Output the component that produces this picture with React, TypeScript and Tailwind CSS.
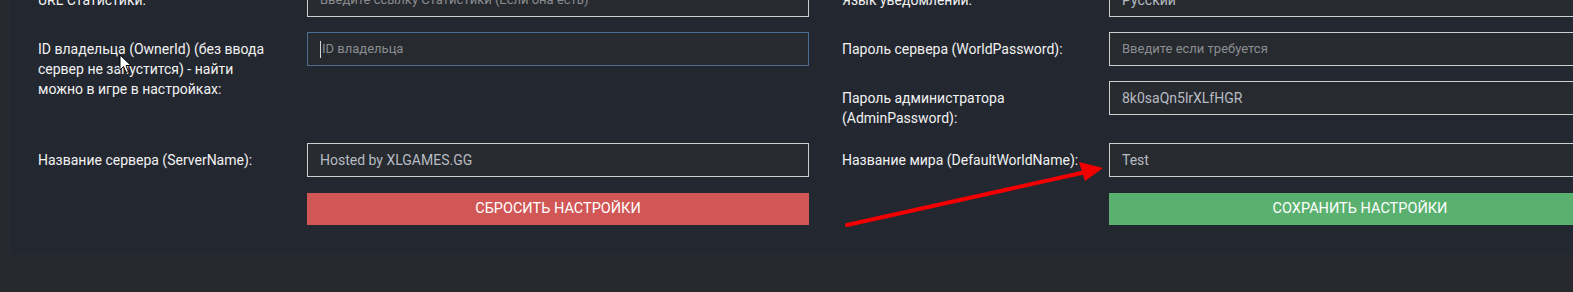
import React from "react";

const font = { fontFamily: "Roboto, 'Liberation Sans', sans-serif" };

function Field({
  label,
  value,
  placeholder,
  focused,
  className = "",
}: {
  label: React.ReactNode;
  value?: string;
  placeholder?: string;
  focused?: boolean;
  className?: string;
}) {
  return (
    <div className={`flex items-start ${className}`}>
      <div className="w-[269px] shrink-0 pt-[7px] pr-6 text-[14px] leading-5 text-[#f2f2f2]">
        {label}
      </div>
      <div
        className={`flex h-[34px] w-[502px] shrink-0 items-center border bg-[#272a2f] px-3 ${
          focused ? "border-[#4b6d93]" : "border-[#cfcfcf]"
        }`}
      >
        {focused && <span className="mr-[1px] h-[17px] w-px bg-[#d8d8d8]" />}
        {value ? (
          <span className="text-[14px] text-[#b7bcc3]">{value}</span>
        ) : (
          <span className="text-[13px] text-[#8b8d91]">{placeholder}</span>
        )}
      </div>
    </div>
  );
}

function Button({ color, children }: { color: string; children: React.ReactNode }) {
  return (
    <div className="flex">
      <div className="w-[269px] shrink-0" />
      <button
        className={`h-[32px] w-[502px] shrink-0 text-[14.5px] uppercase text-white ${color}`}
      >
        {children}
      </button>
    </div>
  );
}

export default function App() {
  return (
    <div className="relative h-[292px] w-full overflow-hidden bg-[#27292e]" style={font}>
      <div className="-mt-[17px] ml-[10px] flex w-[1640px] bg-[#232730] pb-[29px] pl-[28px]">
        {/* left column */}
        <div className="flex w-[802px] shrink-0 flex-col">
          <Field
            className="mb-[15px]"
            label="URL Статистики:"
            placeholder="Введите ссылку Статистики (Если она есть)"
          />
          <Field
            className="mb-[15px] min-h-[96px]"
            focused
            label={
              <>
                ID владельца (OwnerId) (без ввода
                <br />
                сервер не запустится) - найти
                <br />
                можно в игре в настройках:
              </>
            }
            placeholder="ID владельца"
          />
          <Field
            className="mb-4"
            label="Название сервера (ServerName):"
            value="Hosted by XLGAMES.GG"
          />
          <Button color="bg-[#d15656]">Сбросить настройки</Button>
        </div>

        {/* right column */}
        <div className="-mr-[2px] flex w-[800px] shrink-0 flex-col pl-[2px] [&>div>div:first-child]:w-[267px]">
          <Field className="mb-[15px]" label="Язык уведомлений:" value="Русский" />
          <Field
            className="mb-[15px]"
            label="Пароль сервера (WorldPassword):"
            placeholder="Введите если требуется"
          />
          <Field
            className="mb-[15px] min-h-[47px]"
            label={
              <>
                Пароль администратора
                <br />
                (AdminPassword):
              </>
            }
            value="8k0saQn5lrXLfHGR"
          />
          <Field
            className="mb-4"
            label="Название мира (DefaultWorldName):"
            value="Test"
          />
          <Button color="bg-[#5ab16f]">Сохранить настройки</Button>
        </div>
      </div>

      {/* red arrow annotation */}
      <svg
        className="pointer-events-none absolute left-0 top-0"
        width="1573"
        height="292"
        viewBox="0 0 1573 292"
      >
        <line x1="847" y1="225" x2="1086" y2="172" stroke="#f20000" strokeWidth="4" strokeLinecap="round" />
        <polygon points="1103,168 1079,162 1085,181" fill="#f20000" />
      </svg>

      {/* mouse cursor */}
      <svg className="pointer-events-none absolute left-[119px] top-[54px]" width="14" height="20" viewBox="0 0 14 20">
        <path d="M1 1 L1 16 L4.5 12.5 L7 18.5 L9.5 17.5 L7 11.5 L12 11.5 Z" fill="#fff" stroke="#000" strokeWidth="1" strokeLinejoin="round" />
      </svg>
    </div>
  );
}
